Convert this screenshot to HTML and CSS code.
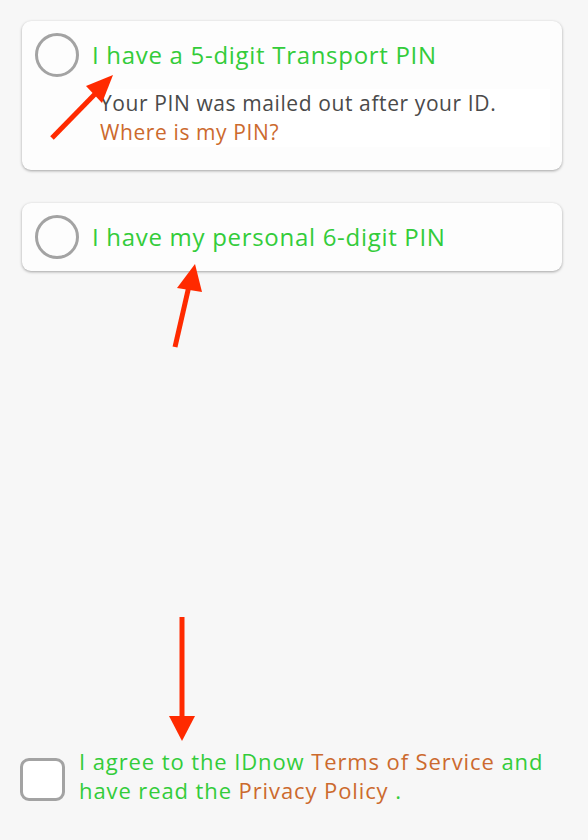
FILE: index.html
```html
<!DOCTYPE html>
<html>
<head>
<meta charset="utf-8">
<link rel="stylesheet" href="styles.css">
</head>
<body>
<div class="page">
  <div class="card card-first">
    <div class="option-row">
      <span class="radio"></span>
      <span class="option-title">I have a 5-digit Transport PIN</span>
    </div>
    <div class="option-detail">
      <div class="detail-text">Your PIN was mailed out after your ID.</div>
      <div class="detail-link">Where is my PIN?</div>
    </div>
  </div>
  <div class="card card-second">
    <div class="option-row">
      <span class="radio"></span>
      <span class="option-title">I have my personal 6-digit PIN</span>
    </div>
  </div>
  <div class="spacer"></div>
  <div class="agree">
    <span class="checkbox"></span>
    <div class="agree-text">I agree to the IDnow <span class="link">Terms of Service</span> and<br>have read the <span class="link">Privacy Policy</span> .</div>
  </div>
  <svg class="annotations" width="588" height="840" viewBox="0 0 588 840">
    <line x1="52" y1="138" x2="96" y2="93" stroke="#ff2a00" stroke-width="5" stroke-linecap="butt"/>
    <polygon points="113,75 86,86 102,103" fill="#ff2a00"/>
    <line x1="175" y1="347" x2="189" y2="286" stroke="#ff2a00" stroke-width="5"/>
    <polygon points="195,264 177,288 202,292" fill="#ff2a00"/>
    <line x1="182" y1="617" x2="182" y2="718" stroke="#ff2a00" stroke-width="5"/>
    <polygon points="169,716 195,716 182,741" fill="#ff2a00"/>
  </svg>
</div>
</body>
</html>
```

FILE: styles.css
```css
html, body {
  margin: 0;
  padding: 0;
  background: #f7f7f7;
}
.page {
  position: relative;
  width: 588px;
  height: 840px;
  box-sizing: border-box;
  padding: 21px 26px 35px 22px;
  display: flex;
  flex-direction: column;
  font-family: "Open Sans", Lato, sans-serif;
}
.card {
  background: #fdfdfd;
  border-radius: 9px;
  box-shadow: 0 1px 3px rgba(0,0,0,0.35);
  padding: 12px 12px;
}
.card-first {
  padding-bottom: 23px;
}
.card-second {
  margin-top: 33px;
}
.option-row {
  display: flex;
  align-items: center;
  gap: 13px;
}
.radio {
  width: 44px;
  height: 44px;
  box-sizing: border-box;
  border: 3px solid #a3a3a3;
  border-radius: 50%;
  flex: none;
  margin-left: 1px;
}
.option-title {
  color: #33cc3a;
  font-size: 24px;
  line-height: 44px;
  letter-spacing: 0.7px;
}
.option-detail {
  margin: 12px 0 0 66px;
  font-size: 21px;
  line-height: 29px;
  letter-spacing: 0.6px;
  background: #ffffff;
}
.detail-text {
  color: #4a4a4a;
}
.detail-link {
  color: #cc6a2e;
}
.spacer {
  flex: 1;
}
.agree {
  display: flex;
  align-items: center;
  gap: 14px;
  margin-left: -2px;
}
.checkbox {
  width: 45px;
  height: 43px;
  box-sizing: border-box;
  border: 3px solid #a3a3a3;
  border-radius: 9px;
  background: #fff;
  flex: none;
  margin-top: 6px;
}
.agree-text {
  color: #33cc3a;
  font-size: 22px;
  line-height: 29px;
  letter-spacing: 0.9px;
}
.link {
  color: #cc6a2e;
}
.annotations {
  position: absolute;
  left: 0;
  top: 0;
  pointer-events: none;
}
```
